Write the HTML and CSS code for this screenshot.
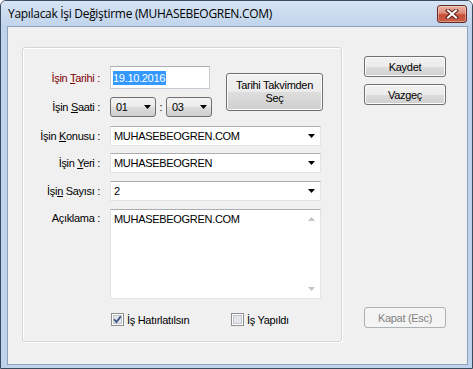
FILE: index.html
```html
<!DOCTYPE html>
<html>
<head>
<meta charset="utf-8">
<link rel="stylesheet" href="styles.css">
</head>
<body>
<div class="window">
  <div class="titlebar">
    <span class="title">Yapılacak İşi Değiştirme (MUHASEBEOGREN.COM)</span>
    <div class="close">
      <svg width="14" height="10" viewBox="0 0 14 10">
        <path d="M3 1.5 L11 8.5 M11 1.5 L3 8.5" stroke="#5a1e16" stroke-width="4" stroke-linecap="square"/>
        <path d="M3 1.5 L11 8.5 M11 1.5 L3 8.5" stroke="#ffffff" stroke-width="2" stroke-linecap="square"/>
      </svg>
    </div>
  </div>
  <div class="client">
    <div class="main">
      <div class="group">
        <div class="toprow">
          <div class="topfields">
            <div class="row">
              <span class="lbl red">İşin <u>T</u>arihi :</span>
              <div class="date"><span class="sel">19.10.2016</span></div>
            </div>
            <div class="row r2">
              <span class="lbl">İşin <u>S</u>aati :</span>
              <div class="ddl"><span>01</span><svg width="7" height="4" viewBox="0 0 7 4"><path d="M0 0h7L3.5 4z" fill="#000"/></svg></div>
              <span class="colon">:</span>
              <div class="ddl"><span>03</span><svg width="7" height="4" viewBox="0 0 7 4"><path d="M0 0h7L3.5 4z" fill="#000"/></svg></div>
            </div>
          </div>
          <div class="btn tarih">Tarihi Takvimden<br>Seç</div>
        </div>
        <div class="row r3">
          <span class="lbl">İşin <u>K</u>onusu :</span>
          <div class="combo"><span>MUHASEBEOGREN.COM</span><svg width="7" height="4" viewBox="0 0 7 4"><path d="M0 0h7L3.5 4z" fill="#000"/></svg></div>
        </div>
        <div class="row r4">
          <span class="lbl">İşin <u>Y</u>eri :</span>
          <div class="combo"><span>MUHASEBEOGREN</span><svg width="7" height="4" viewBox="0 0 7 4"><path d="M0 0h7L3.5 4z" fill="#000"/></svg></div>
        </div>
        <div class="row r5">
          <span class="lbl">İşi<u>n</u> Sayısı :</span>
          <div class="combo"><span>2</span><svg width="7" height="4" viewBox="0 0 7 4"><path d="M0 0h7L3.5 4z" fill="#000"/></svg></div>
        </div>
        <div class="row r6">
          <span class="lbl top">Açıklama :</span>
          <div class="memo">
            <div class="memotext">MUHASEBEOGREN.COM</div>
            <div class="scroll">
              <svg width="7" height="4" viewBox="0 0 7 4"><path d="M0 4h7L3.5 0z" fill="#c4c4c4"/></svg>
              <svg width="7" height="4" viewBox="0 0 7 4"><path d="M0 0h7L3.5 4z" fill="#c4c4c4"/></svg>
            </div>
          </div>
        </div>
        <div class="row r7">
          <span class="lbl"></span>
          <div class="checks">
            <label class="chk first">
              <svg width="13" height="13" viewBox="0 0 13 13">
                <rect x="0.5" y="0.5" width="12" height="12" fill="#ffffff" stroke="#8e8f8f"/>
                <rect x="2.5" y="2.5" width="8" height="8" fill="#e3e5e9" stroke="#c2c6cc"/>
                <path d="M3.2 6.3 L5.4 9 L9.8 3.4" fill="none" stroke="#3f5486" stroke-width="1.8"/>
              </svg>
              <span>İş Hatırlatılsın</span>
            </label>
            <label class="chk">
              <svg width="13" height="13" viewBox="0 0 13 13">
                <rect x="0.5" y="0.5" width="12" height="12" fill="#ffffff" stroke="#8e8f8f"/>
                <rect x="2.5" y="2.5" width="8" height="8" fill="#e3e5e9" stroke="#c2c6cc"/>
              </svg>
              <span>İş Yapıldı</span>
            </label>
          </div>
        </div>
      </div>
      <div class="side">
        <div class="btn">Kaydet</div>
        <div class="btn gap">Vazgeç</div>
        <div class="btn disabled">Kapat (Esc)</div>
      </div>
    </div>
  </div>
</div>
</body>
</html>
```
FILE: styles.css
```css
* { box-sizing: border-box; margin: 0; padding: 0; }
html, body { width: 473px; height: 369px; overflow: hidden; background: #ffffff; }
body { font-family: "Liberation Sans", Arial, sans-serif; font-size: 11px; color: #000; letter-spacing: -0.3px; }

.window {
  width: 473px; height: 369px;
  border: 1px solid #3a4b5e;
  border-radius: 6px 6px 0 0;
  background: #bfd4ec;
  display: flex; flex-direction: column;
}
.titlebar {
  height: 25px; flex: none;
  display: flex; align-items: center;
  padding-left: 7px;
  background: linear-gradient(#d6e4f4, #c0d4ec);
  border-radius: 5px 5px 0 0;
}
.title { flex: 1; font-family: "Open Sans", sans-serif; font-size: 12px; letter-spacing: -0.3px; color: #000; white-space: nowrap; }
.close {
  width: 30px; height: 18px; margin-right: 5px;
  border: 1px solid #6b2a20; border-radius: 3px;
  background: linear-gradient(#eab1a3 0%, #dc8a76 45%, #c6503a 55%, #c85f45 100%);
  box-shadow: inset 0 0 0 1px rgba(255,255,255,0.35);
  display: flex; align-items: center; justify-content: center;
}

.client {
  flex: 1;
  margin: 0 4px 3px 6px;
  border: 1px solid #8ea3b9;
  background: #f0f0f0;
  padding: 20px 0 0 14px;
}
.main { display: flex; }
.group {
  width: 320px;
  border: 1px solid #d5d5d5;
  border-radius: 3px;
  box-shadow: inset 1px 1px 0 #ffffff, 1px 1px 0 #ffffff;
  padding: 18px 0 14px 0;
  display: flex; flex-direction: column;
}
.row { display: flex; align-items: center; }
.lbl { width: 77px; margin-right: 10px; text-align: right; white-space: nowrap; flex: none; }
.lbl.red { color: #800000; }
.lbl.top { align-self: flex-start; padding-top: 3px; }
u { text-decoration: underline; text-underline-offset: 1px; }

.toprow { display: flex; align-items: center; }
.topfields { display: flex; flex-direction: column; }
.date {
  width: 100px; height: 23px;
  background: #fff;
  border: 1px solid #c5cad3; border-top-color: #abadb3;
  padding-left: 2px;
  display: flex; align-items: center;
}
.sel { background: #3399ff; color: #fff; line-height: 14px; padding: 0 1px 0 0; }
.r2 { margin-top: 8px; }
.ddl {
  width: 46px; height: 20px;
  border: 1px solid #707070; border-radius: 3px;
  background: linear-gradient(#f3f3f3 0%, #ebebeb 50%, #dddddd 51%, #cfcfcf 100%);
  display: flex; align-items: center; justify-content: space-between;
  padding: 0 4px 0 5px;
}
.colon { width: 10px; text-align: center; }
.tarih {
  width: 97px; height: 38px; margin-left: 14px;
  line-height: 13px;
}
.btn {
  border: 1px solid #707070; border-radius: 3px;
  background: linear-gradient(#f2f2f2 0%, #ebebeb 50%, #dddddd 51%, #cfcfcf 100%);
  box-shadow: inset 0 0 0 1px #fcfcfc;
  display: flex; align-items: center; justify-content: center; text-align: center;
}

.combo {
  width: 211px; height: 20px;
  background: #fff;
  border: 1px solid #e2e3ea; border-top-color: #abadb3;
  display: flex; align-items: center; justify-content: space-between;
  padding: 0 5px 0 3px;
}
.r3 { margin-top: 9px; }
.r4 { margin-top: 7px; }
.r5 { margin-top: 8px; }
.r6 { margin-top: 8px; align-items: flex-start; }
.memo {
  width: 211px; height: 90px;
  background: #fff;
  border: 1px solid #e2e3ea; border-top-color: #abadb3;
  display: flex;
}
.memotext { flex: 1; padding: 3px 0 0 3px; }
.scroll {
  width: 17px;
  display: flex; flex-direction: column; justify-content: space-between; align-items: center;
  padding: 7px 0 7px 0;
}
.r7 { margin-top: 13px; height: 15px; }
.checks { display: flex; align-items: center; }
.chk { display: flex; align-items: center; }
.chk svg { margin-right: 3px; }
.chk.first { width: 120px; margin-left: 1px; }

.side {
  width: 82px; margin-left: 22px;
  display: flex; flex-direction: column;
  padding-top: 9px; padding-bottom: 14px;
}
.side .btn { height: 21px; }
.side .gap { margin-top: 7px; }
.side .disabled {
  margin-top: auto;
  border-color: #adb2b5;
  background: #f4f4f4;
  box-shadow: none;
  color: #838383;
}
```
